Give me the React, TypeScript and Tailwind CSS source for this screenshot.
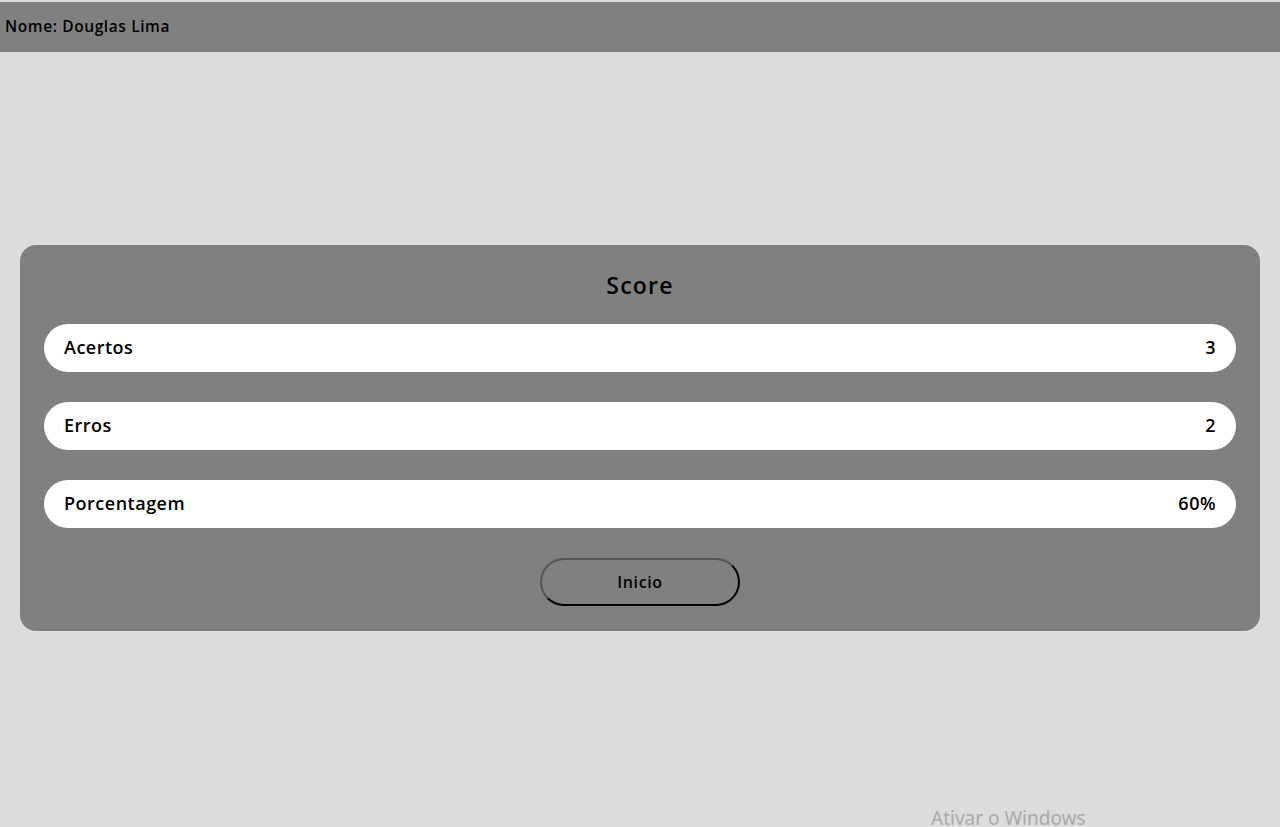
import React from "react";

type Stat = {
  label: string;
  value: string;
};

const stats: Stat[] = [
  { label: "Acertos", value: "3" },
  { label: "Erros", value: "2" },
  { label: "Porcentagem", value: "60%" },
];

export default function App() {
  return (
    <div
      className="relative flex min-h-screen flex-col bg-[#dcdcdc] text-black"
      style={{ fontFamily: '"Open Sans", "Noto Sans", sans-serif' }}
    >
      {/* top bar */}
      <header className="mt-[2px] flex h-[50px] items-center bg-[#808080] px-[5px]">
        <span className="text-[15.5px] font-semibold tracking-[0.6px]">Nome: Douglas Lima</span>
      </header>

      <main className="flex flex-1 items-center px-5 pb-1">
        <div className="w-full rounded-2xl bg-[#808080] px-6 pt-6 pb-[25px]">
          <h1 className="text-center text-[23px] leading-[33px] font-semibold tracking-[1.2px]">Score</h1>

          <div className="mt-[22px] flex flex-col gap-[30px]">
            {stats.map((s) => (
              <div
                key={s.label}
                className="flex h-12 items-center justify-between rounded-full bg-white px-5 text-[18px] font-semibold tracking-[0.5px]"
              >
                <span>{s.label}</span>
                <span>{s.value}</span>
              </div>
            ))}
          </div>

          <div className="mt-[30px] flex justify-center">
            <button className="h-12 w-[200px] rounded-full border-2 border-black bg-transparent text-[16px] font-semibold tracking-[0.6px] [border-style:outset]">
              Inicio
            </button>
          </div>
        </div>
      </main>

      <div
        className="absolute left-[931px] top-[806px] text-[19px] leading-[24px] text-[#a9a9a9]"
        style={{ fontFamily: '"Noto Sans", "Open Sans", sans-serif' }}
      >
        Ativar o Windows
      </div>
    </div>
  );
}
